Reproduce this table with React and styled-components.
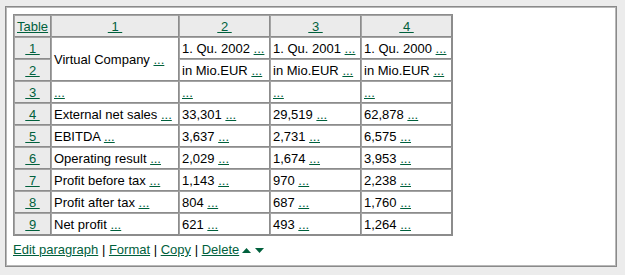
import React from "react";
import styled, { createGlobalStyle } from "styled-components";

const GlobalStyle = createGlobalStyle`
  html, body {
    margin: 0;
    padding: 0;
    background: #ececec;
  }
  body {
    font-family: "Liberation Sans", Arial, sans-serif;
    font-size: 13px;
    color: #000;
  }
`;

const Page = styled.div`
  padding: 6px 8px 8px 5px;
  width: 625px;
  height: 275px;
  box-sizing: border-box;
`;

const Panel = styled.div`
  width: 612px;
  height: 261px;
  box-sizing: border-box;
  background: #fff;
  border: 1px solid #8a8a8a;
  box-shadow: inset 1px 1px 0 #b8b8b8, inset -1px -1px 0 #b8b8b8;
  padding: 7px 7px 0 7px;
`;

const Table = styled.table`
  border-collapse: separate;
  border-spacing: 0;
  border: 1px solid #8c8c8c;
  table-layout: fixed;
  width: 440px;
`;

const Col = styled.col`
  width: ${(p) => p.$w}px;
`;

const Cell = styled.td`
  box-sizing: border-box;
  height: 22px;
  border: 1px solid #a4a4a4;
  border-color: #a4a4a4 #8c8c8c #8c8c8c #a4a4a4;
  padding: 0 2px;
  background: ${(p) => (p.$head ? "#ebebeb" : "#fff")};
  text-align: ${(p) => (p.$center ? "center" : "left")};
  vertical-align: middle;
  white-space: nowrap;
  overflow: hidden;
  line-height: 15px;
`;

const Link = styled.a`
  color: #00603c;
  text-decoration: underline;
  cursor: pointer;
`;

const Footer = styled.div`
  margin-top: 6px;
  line-height: 16px;
  display: flex;
  align-items: center;
  white-space: pre;
`;

const Sep = styled.span`
  color: #000;
`;

const Arrows = styled.span`
  display: inline-flex;
  gap: 4px;
  margin-left: 3px;
  align-items: center;
`;

const More = () => <Link>...</Link>;

const Num = ({ n }) => <Link>{"\u00a0" + n + "\u00a0"}</Link>;

const rows = [
  ["External net sales", "33,301", "29,519", "62,878"],
  ["EBITDA", "3,637", "2,731", "6,575"],
  ["Operating result", "2,029", "1,674", "3,953"],
  ["Profit before tax", "1,143", "970", "2,238"],
  ["Profit after tax", "804", "687", "1,760"],
  ["Net profit", "621", "493", "1,264"],
];

const TextCell = ({ children }) => (
  <Cell>
    {children} <More />
  </Cell>
);

export default function App() {
  return (
    <Page>
      <GlobalStyle />
      <Panel>
        <Table>
          <colgroup>
            <Col $w={37} />
            <Col $w={128} />
            <Col $w={91} />
            <Col $w={91} />
            <Col $w={91} />
          </colgroup>
          <tbody>
            <tr>
              <Cell $head>
                <Link>Table</Link>
              </Cell>
              {[1, 2, 3, 4].map((n) => (
                <Cell $head $center key={n}>
                  <Num n={n} />
                </Cell>
              ))}
            </tr>
            <tr>
              <Cell $head $center>
                <Num n={1} />
              </Cell>
              <Cell rowSpan={2}>
                Virtual Company <More />
              </Cell>
              <TextCell>1. Qu. 2002</TextCell>
              <TextCell>1. Qu. 2001</TextCell>
              <TextCell>1. Qu. 2000</TextCell>
            </tr>
            <tr>
              <Cell $head $center>
                <Num n={2} />
              </Cell>
              <TextCell>in Mio.EUR</TextCell>
              <TextCell>in Mio.EUR</TextCell>
              <TextCell>in Mio.EUR</TextCell>
            </tr>
            <tr>
              <Cell $head $center>
                <Num n={3} />
              </Cell>
              <Cell><More /></Cell>
              <Cell><More /></Cell>
              <Cell><More /></Cell>
              <Cell><More /></Cell>
            </tr>
            {rows.map((r, i) => (
              <tr key={r[0]}>
                <Cell $head $center>
                  <Num n={i + 4} />
                </Cell>
                {r.map((v) => (
                  <TextCell key={v}>{v}</TextCell>
                ))}
              </tr>
            ))}
          </tbody>
        </Table>
        <Footer>
          <Link>Edit paragraph</Link>
          <Sep> | </Sep>
          <Link>Format</Link>
          <Sep> | </Sep>
          <Link>Copy</Link>
          <Sep> | </Sep>
          <Link>Delete</Link>
          <Arrows>
            <svg width="9" height="5" viewBox="0 0 9 5">
              <polygon points="0,5 9,5 4.5,0" fill="#00603c" />
            </svg>
            <svg width="9" height="5" viewBox="0 0 9 5">
              <polygon points="0,0 9,0 4.5,5" fill="#00603c" />
            </svg>
          </Arrows>
        </Footer>
      </Panel>
    </Page>
  );
}
